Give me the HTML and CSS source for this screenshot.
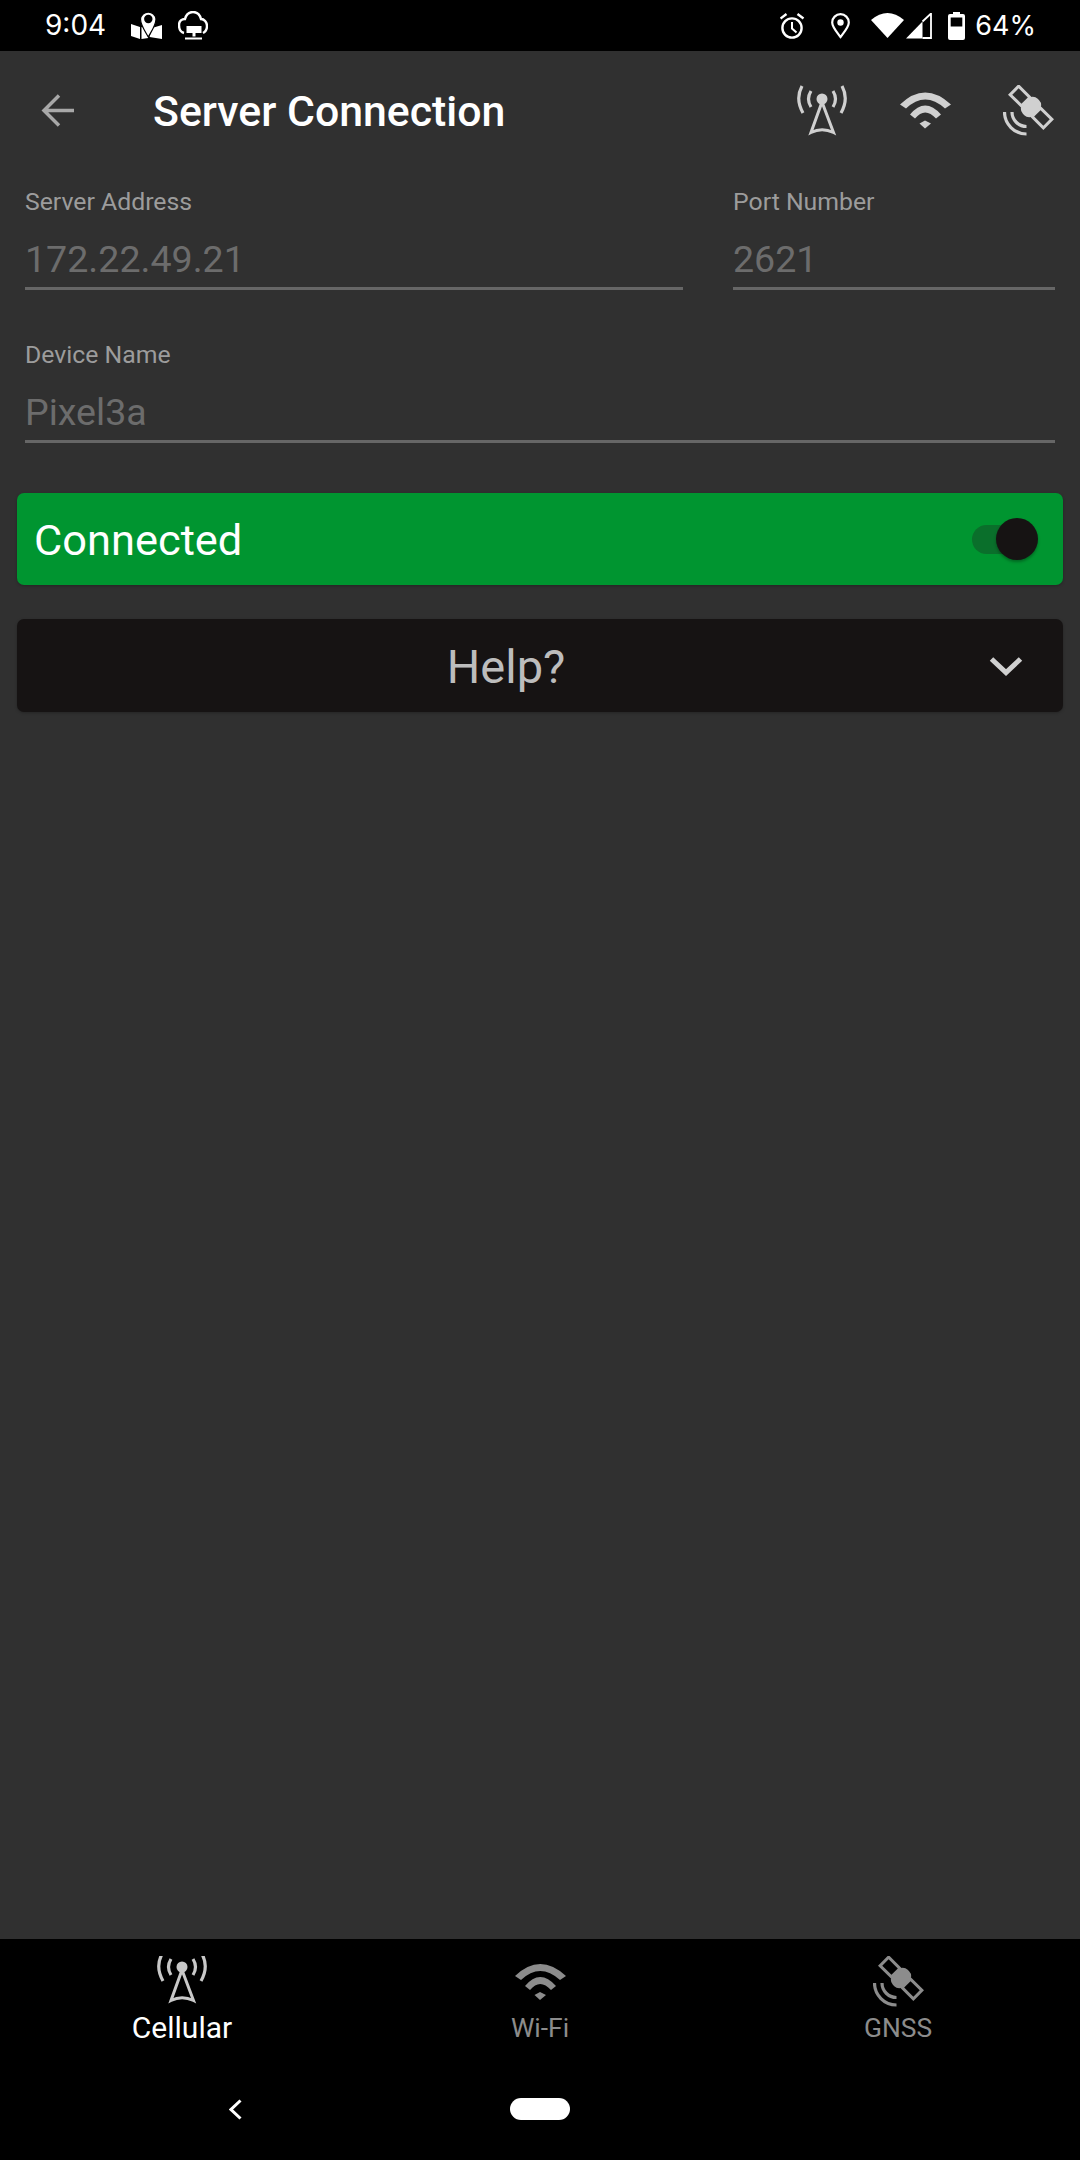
FILE: index.html
```html
<!DOCTYPE html>
<html lang="en">
<head>
    <meta charset="UTF-8">
    <meta name="viewport" content="width=device-width, initial-scale=1.0">
    <title>Server Connection</title>
    <link rel="stylesheet" href="styles.css">
</head>
<body>

    <!-- shared icon shapes -->
    <svg class="icon-defs" width="0" height="0">
        <defs>
            <g id="glyph-tower">
                <circle cx="25" cy="14" r="5.5" fill="currentColor"/>
                <path d="M25 17 L14 47.5 Q25 42 36.5 47.5 Z" fill="none" stroke="currentColor" stroke-width="3"/>
                <path d="M5 1 Q-2 14 6 28 M14 6 Q9 14 14 22 M45 1 Q52 14 44 28 M36 6 Q41 14 36 22" fill="none" stroke="currentColor" stroke-width="3.2"/>
            </g>
            <g id="glyph-wifi" fill="currentColor">
                <path d="M0 12 Q25 -12 51 12 L45 16 Q25 -2 6 16 Z"/>
                <path d="M10 22 Q25 4 41 22 L36 26 Q25 14 15 26 Z"/>
                <path d="M19.5 31 L25 28 L31 31 L25 36 Z"/>
            </g>
            <g id="glyph-satellite">
                <g transform="translate(28 22) rotate(45)">
                    <rect x="-23.5" y="-6" width="16" height="12" fill="none" stroke="currentColor" stroke-width="3"/>
                    <rect x="7.5" y="-6" width="16" height="12" fill="none" stroke="currentColor" stroke-width="3"/>
                    <rect x="-8" y="-10.5" width="16" height="21" rx="7" fill="currentColor"/>
                </g>
                <path d="M1.5 27 A22 22 0 0 0 23.5 49 M9 27 A14.5 14.5 0 0 0 23.5 41.5" fill="none" stroke="currentColor" stroke-width="3.2"/>
            </g>
        </defs>
    </svg>

    <div class="screen">
        <!-- Status bar -->
        <div class="status-bar">
            <span class="status-text">9:04</span>
            <svg class="st-map" width="31" height="29" viewBox="0 0 31 29">
                <path d="M0 13 L9 16 V28 L0 25 Z M10.5 16 L14 17 L17.3 27 L10.5 28 Z M21 17 L31 14 V28 L18.5 26 Z" fill="#fff"/>
                <path d="M17.3 26 C14 20 9.5 14 9.5 8 A7.8 7.8 0 0 1 25 8 C25 14 20.6 20 17.3 26 Z" fill="#fff" stroke="#000" stroke-width="1.2"/>
                <circle cx="17.3" cy="8" r="4.2" fill="#000"/>
            </svg>
            <svg class="st-cloud" width="30" height="29" viewBox="0 0 30 29">
                <path d="M6 22 C2 21 1 17 1 14 C1 10 4 8 7 8 C8 4 11 1 15 1 C19 1 22 4 23 8 C26 8 29 11 29 15 C29 19 27 21 25 22" fill="none" stroke="#fff" stroke-width="2.4"/>
                <path d="M8.5 15 H23.5 V22 H17.5 V25.5 H14.5 V22 H8.5 Z" fill="#fff"/>
                <rect x="7" y="26.5" width="17" height="2" fill="#fff"/>
            </svg>
            <span class="status-gap"></span>
            <svg width="25" height="26" viewBox="0 0 25 26">
                <circle cx="12" cy="15" r="9.6" fill="none" stroke="#fff" stroke-width="2.4"/>
                <path d="M12 9 V15.5 L16.5 19.5" fill="none" stroke="#fff" stroke-width="2"/>
                <path d="M0.5 5.5 L6.5 1 M23.5 5.5 L17.5 1" fill="none" stroke="#fff" stroke-width="2.4"/>
            </svg>
            <svg class="st-pin" width="19" height="26" viewBox="0 0 19 26">
                <path d="M9.5 24 C5 18 1.2 14 1.2 9.5 A8.3 8.3 0 0 1 17.8 9.5 C17.8 14 14 18 9.5 24 Z" fill="none" stroke="#fff" stroke-width="2.2"/>
                <circle cx="9.5" cy="9.5" r="3.2" fill="#fff"/>
            </svg>
            <svg class="st-wifi" width="33" height="26" viewBox="0 0 33 26">
                <path d="M0 7 Q16.5 -7 33 7 L16.5 25 Z" fill="#fff"/>
            </svg>
            <svg class="st-signal" width="26" height="26" viewBox="0 0 26 26">
                <path d="M0 25.5 L16.5 8.5 V25.5 Z" fill="#fff"/>
                <path d="M16.5 8.5 L25 0.5 V25 H16.5" fill="none" stroke="#fff" stroke-width="1.8"/>
            </svg>
            <svg class="st-battery" width="17" height="28" viewBox="0 0 17 28">
                <path d="M5 0 H12 V2 H15 A2 2 0 0 1 17 4 V26 A2 2 0 0 1 15 28 H2 A2 2 0 0 1 0 26 V4 A2 2 0 0 1 2 2 H5 Z" fill="#fff"/>
                <rect x="2.7" y="5.5" width="11.6" height="9" fill="#000"/>
            </svg>
            <span class="status-text st-percent">64%</span>
        </div>

        <!-- Toolbar -->
        <div class="toolbar">
            <svg class="back-arrow" width="33" height="33" viewBox="0 0 33 33">
                <path d="M33 16.5 H3 M18 1.5 L3 16.5 L18 31.5" fill="none" stroke="currentColor" stroke-width="3.5"/>
            </svg>
            <h1 class="toolbar-title">Server Connection</h1>
            <div class="toolbar-icons">
                <svg width="51" height="51" viewBox="0 0 51 51"><use href="#glyph-tower"/></svg>
                <svg width="51" height="51" viewBox="0 -7.5 51 51"><use href="#glyph-wifi"/></svg>
                <svg width="51" height="51" viewBox="0 0 51 51"><use href="#glyph-satellite"/></svg>
            </div>
        </div>

        <!-- Conteudo -->
        <div class="content">
            <div class="form">
                <div class="field-row">
                    <div class="field">
                        <div class="field-label">Server Address</div>
                        <div class="field-value">172.22.49.21</div>
                    </div>
                    <div class="field">
                        <div class="field-label">Port Number</div>
                        <div class="field-value">2621</div>
                    </div>
                </div>
                <div class="field">
                    <div class="field-label">Device Name</div>
                    <div class="field-value">Pixel3a</div>
                </div>
            </div>

            <div class="card card-connected">
                <span class="card-title">Connected</span>
                <div class="switch">
                    <div class="switch-track"></div>
                    <div class="switch-thumb"></div>
                </div>
            </div>

            <div class="card card-help">
                <span class="help-title">Help?</span>
                <svg class="help-chevron" width="34" height="20" viewBox="0 0 34 20">
                    <path d="M2.5 3 L17 16.5 L31.5 3" fill="none" stroke="currentColor" stroke-width="5"/>
                </svg>
            </div>
        </div>

        <!-- Bottom navigation -->
        <div class="bottom">
            <div class="tabs">
                <div class="tab active">
                    <svg width="51" height="51" viewBox="0 3 51 51"><use href="#glyph-tower"/></svg>
                    <span class="tab-label">Cellular</span>
                </div>
                <div class="tab">
                    <svg width="51" height="51" viewBox="0 -8 51 51"><use href="#glyph-wifi"/></svg>
                    <span class="tab-label">Wi-Fi</span>
                </div>
                <div class="tab">
                    <svg width="51" height="51" viewBox="0 0 51 51"><use href="#glyph-satellite"/></svg>
                    <span class="tab-label">GNSS</span>
                </div>
            </div>
            <div class="gesture-bar">
                <svg width="13" height="21" viewBox="0 0 13 21">
                    <path d="M11.5 1.5 L2 10.5 L11.5 19.5" fill="none" stroke="#fff" stroke-width="3"/>
                </svg>
                <div class="home-pill"></div>
            </div>
        </div>
    </div>

</body>
</html>
```

FILE: styles.css
```css
:root {
    --bg: #303030;
    --green: #009530;
    --dark-card: #161313;
    --label: #9c9c9c;
    --value: #6c6c6c;
    --icon: #d0d0d0;
}

* {
    box-sizing: border-box;
}

body {
    margin: 0;
    background-color: var(--bg);
    font-family: Roboto, "Liberation Sans", sans-serif;
}

.icon-defs {
    position: absolute;
}

.screen {
    display: flex;
    flex-direction: column;
    width: 1080px;
    height: 2160px;
    overflow: hidden;
}

svg {
    display: block;
    flex-shrink: 0;
}

/* --- Status bar --- */
.status-bar {
    display: flex;
    align-items: center;
    height: 51px;
    padding: 0 44px 0 45px;
    background-color: #000;
    color: #fff;
}

.status-text {
    font-family: Inter, Roboto, sans-serif;
    font-size: 28px;
    line-height: 51px;
}

.status-gap {
    flex: 1;
}

.st-map {
    margin-left: 25px;
}

.st-cloud {
    margin-left: 16px;
}

.st-pin {
    margin-left: 26px;
}

.st-wifi {
    margin-left: 21px;
}

.st-signal {
    margin-left: 2px;
}

.st-battery {
    margin-left: 16px;
}

.st-percent {
    margin-left: 10px;
    font-size: 27px;
}

/* --- Toolbar --- */
.toolbar {
    display: flex;
    align-items: center;
    height: 118px;
    padding: 0 26px 0 41px;
}

.back-arrow {
    color: #a8a8a8;
}

.toolbar-title {
    flex: 1;
    margin: 2px 0 0 79px;
    color: #fff;
    font-size: 42.8px;
    font-weight: 500;
}

.toolbar-icons {
    display: flex;
    gap: 52px;
    color: var(--icon);
}

/* --- Form --- */
.content {
    flex: 1;
}

.form {
    display: flex;
    flex-direction: column;
    gap: 48px;
    padding: 16px 25px 0;
}

.field-row {
    display: grid;
    grid-template-columns: 658px 322px;
    gap: 50px;
}

.field {
    height: 105px;
    border-bottom: 3px solid #666;
}

.field-label {
    color: var(--label);
    font-size: 24.8px;
    line-height: 34px;
}

.field-value {
    margin-top: 18px;
    color: var(--value);
    font-size: 37.6px;
    line-height: 44px;
}

/* --- Cards --- */
.card {
    display: flex;
    align-items: center;
    margin: 0 17px;
    border-radius: 7px;
    box-shadow: 0 1px 3px rgba(0, 0, 0, 0.25);
}

.card-connected {
    height: 92px;
    margin-top: 50px;
    padding: 0 25px 0 17px;
    justify-content: space-between;
    background-color: var(--green);
}

.card-title {
    margin-top: 3px;
    color: #fff;
    font-size: 43.4px;
}

.switch {
    position: relative;
    width: 66px;
    height: 42px;
}

.switch-track {
    width: 58px;
    height: 29px;
    margin-top: 7px;
    border-radius: 15px;
    background-color: #0a6f2b;
}

.switch-thumb {
    position: absolute;
    top: 0;
    right: 0;
    width: 42px;
    height: 42px;
    border-radius: 50%;
    background-color: var(--dark-card);
    box-shadow: 0 2px 3px rgba(0, 0, 0, 0.3);
}

.card-help {
    height: 93px;
    margin-top: 34px;
    padding: 0 40px 0 6px;
    background-color: var(--dark-card);
}

.help-title {
    flex: 1;
    margin-top: 2px;
    color: #bdbdbd;
    font-size: 47px;
    text-align: center;
}

.help-chevron {
    color: var(--icon);
}

/* --- Bottom navigation --- */
.bottom {
    height: 221px;
    background-color: #000;
}

.tabs {
    display: grid;
    grid-template-columns: repeat(3, 358px);
    height: 120px;
    padding: 17px 3px 0;
}

.tab {
    display: flex;
    flex-direction: column;
    align-items: center;
    color: #8c8c8c;
}

.tab.active {
    color: #c8c8c8;
}

.tab-label {
    margin-top: 3px;
    font-size: 26.4px;
    line-height: 36px;
}

.tab.active .tab-label {
    color: #fff;
    font-size: 30px;
}

.gesture-bar {
    display: flex;
    align-items: center;
    height: 100px;
    padding-left: 229px;
}

.home-pill {
    width: 60px;
    height: 22px;
    margin-left: 268px;
    border-radius: 11px;
    background-color: #fff;
}
```
